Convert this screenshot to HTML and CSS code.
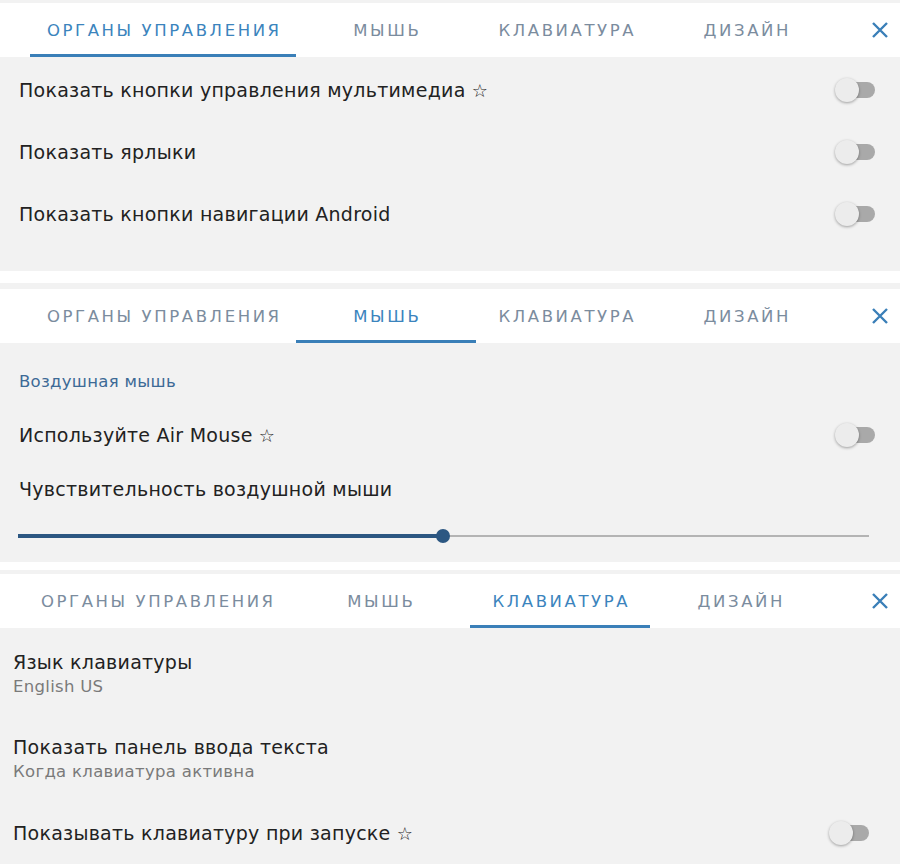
FILE: index.html
```html
<!DOCTYPE html>
<html lang="ru">
<head>
<meta charset="utf-8">
<title>Настройки</title>
<link rel="stylesheet" href="styles.css">
</head>
<body>
<section class="panel panel-one">
  <div class="strip strip-3"></div>
  <nav class="tabs">
    <div class="tab tab-wide active">ОРГАНЫ УПРАВЛЕНИЯ</div>
    <div class="tab">МЫШЬ</div>
    <div class="tab">КЛАВИАТУРА</div>
    <div class="tab">ДИЗАЙН</div>
    <div class="close"><svg width="18" height="18" viewBox="0 0 18 18"><path d="M2 2 L16 16 M16 2 L2 16" stroke="#3a7fb8" stroke-width="2.4" fill="none"/></svg></div>
  </nav>
  <div class="content c1">
    <div class="row"><span class="label">Показать кнопки управления мультимедиа <span class="star">☆</span></span><span class="toggle"><span class="thumb"></span></span></div>
    <div class="row"><span class="label">Показать ярлыки</span><span class="toggle"><span class="thumb"></span></span></div>
    <div class="row"><span class="label">Показать кнопки навигации Android</span><span class="toggle"><span class="thumb"></span></span></div>
  </div>
</section>
<div class="gap gap-12"></div>
<section class="panel panel-two">
  <div class="strip strip-6"></div>
  <nav class="tabs">
    <div class="tab tab-wide">ОРГАНЫ УПРАВЛЕНИЯ</div>
    <div class="tab active">МЫШЬ</div>
    <div class="tab">КЛАВИАТУРА</div>
    <div class="tab">ДИЗАЙН</div>
    <div class="close"><svg width="18" height="18" viewBox="0 0 18 18"><path d="M2 2 L16 16 M16 2 L2 16" stroke="#3a7fb8" stroke-width="2.4" fill="none"/></svg></div>
  </nav>
  <div class="content c2">
    <div class="section-title">Воздушная мышь</div>
    <div class="row"><span class="label">Используйте Air Mouse <span class="star">☆</span></span><span class="toggle"><span class="thumb"></span></span></div>
    <div class="slider-label label">Чувствительность воздушной мыши</div>
    <div class="slider">
      <div class="fill" style="width: 425px"></div>
      <div class="knob"></div>
      <div class="rest"></div>
    </div>
  </div>
</section>
<div class="gap gap-8"></div>
<section class="panel panel-three">
  <div class="strip strip-4"></div>
  <nav class="tabs">
    <div class="tab tab-wide">ОРГАНЫ УПРАВЛЕНИЯ</div>
    <div class="tab">МЫШЬ</div>
    <div class="tab active">КЛАВИАТУРА</div>
    <div class="tab">ДИЗАЙН</div>
    <div class="close"><svg width="18" height="18" viewBox="0 0 18 18"><path d="M2 2 L16 16 M16 2 L2 16" stroke="#3a7fb8" stroke-width="2.4" fill="none"/></svg></div>
  </nav>
  <div class="content c3">
    <div class="item first">
      <div class="label">Язык клавиатуры</div>
      <div class="sub">English US</div>
    </div>
    <div class="item second">
      <div class="label">Показать панель ввода текста</div>
      <div class="sub">Когда клавиатура активна</div>
    </div>
    <div class="row row-last"><span class="label">Показывать клавиатуру при запуске <span class="star">☆</span></span><span class="toggle"><span class="thumb"></span></span></div>
  </div>
</section>
</body>
</html>
```

FILE: styles.css
```css
html, body {
  margin: 0;
  padding: 0;
  background: #ffffff;
  font-family: "DejaVu Sans", "Noto Sans", sans-serif;
}
body {
  width: 900px;
  height: 865px;
  overflow: hidden;
}
.panel {
  display: flex;
  flex-direction: column;
  width: 900px;
}
.panel-three {
  margin-left: -6px;
  width: 906px;
}
.strip {
  background: #f2f2f2;
}
.strip-3 { height: 3px; }
.strip-6 { height: 6px; }
.strip-4 { height: 4px; }
.gap { background: #ffffff; }
.gap-12 { height: 12px; }
.gap-8 { height: 8px; }

.tabs {
  display: flex;
  align-items: stretch;
  height: 54px;
  background: #ffffff;
  padding-left: 30px;
  box-sizing: border-box;
}
.tab {
  min-width: 180px;
  box-sizing: border-box;
  padding: 0 0 0 2.6px;
  display: flex;
  align-items: center;
  justify-content: center;
  font-size: 16.5px;
  font-weight: 400;
  letter-spacing: 2.6px;
  color: #7b8c9e;
  border-bottom: 3px solid transparent;
  padding-top: 3px;
  white-space: nowrap;
}
.tab-wide {
  width: 266px;
}
.tab.active {
  color: #3b84bd;
  border-bottom-color: #3a7fb8;
}
.close {
  margin-left: auto;
  width: 40px;
  display: flex;
  align-items: center;
  justify-content: center;
}

.content {
  background: #f2f2f2;
  padding: 0 25px 0 19px;
  box-sizing: border-box;
  display: flex;
  flex-direction: column;
}
.c1 { height: 214px; padding-top: 2px; }
.c2 { height: 219px; }
.c3 { flex: 1; height: 237px; }

.row {
  height: 62px;
  display: flex;
  align-items: center;
  justify-content: space-between;
}
.label {
  font-size: 19px;
  letter-spacing: 0.25px;
  color: #222222;
  line-height: 24px;
  white-space: nowrap;
}
.star {
  font-size: 18px;
}
.toggle {
  position: relative;
  width: 39px;
  height: 16px;
  background: #a9a9a9;
  border-radius: 8px;
}
.thumb {
  position: absolute;
  left: -1px;
  top: -4px;
  width: 24px;
  height: 24px;
  border-radius: 50%;
  background: #ececec;
  box-shadow: 0 1px 3px rgba(0, 0, 0, 0.35);
}

.section-title {
  margin-top: 28px;
  font-size: 16.5px;
  letter-spacing: 0.3px;
  line-height: 22px;
  color: #3d6a96;
}
.c2 .row {
  margin-top: 11px;
}
.slider-label {
  margin-top: 11px;
}
.slider {
  margin-top: 25px;
  height: 20px;
  display: flex;
  align-items: center;
  margin-left: -1px;
  margin-right: 6px;
}
.fill {
  height: 4px;
  background: #2c5782;
}
.knob {
  width: 14px;
  height: 14px;
  border-radius: 50%;
  background: #2c5782;
  margin-left: -7px;
  margin-right: -7px;
  position: relative;
  z-index: 1;
}
.rest {
  flex: 1;
  height: 2px;
  background: #b4b4b4;
}

.c3 {
  padding-left: 19px;
  padding-right: 31px;
}
.item .sub {
  margin-top: 2px;
  font-size: 16.5px;
  letter-spacing: 0.3px;
  line-height: 22px;
  color: #7a7a7a;
}
.item.first { margin-top: 22px; }
.item.second { margin-top: 37px; }
.row-last {
  margin-top: 19px;
}
```
